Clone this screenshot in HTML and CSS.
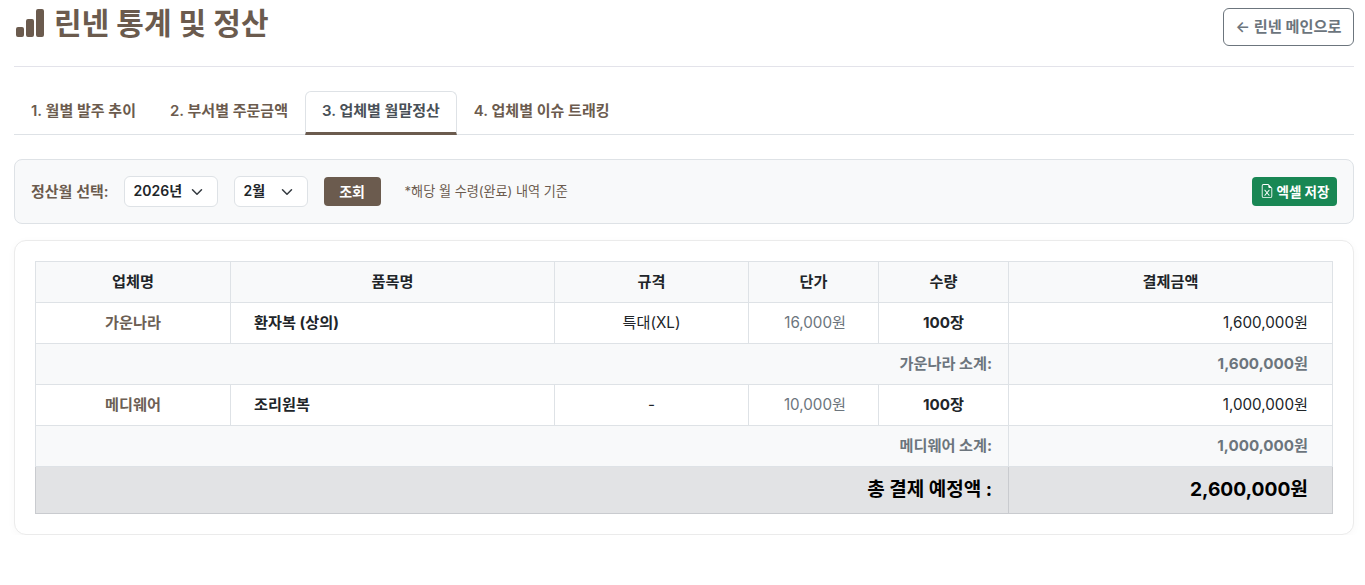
FILE: index.html
```html
<!DOCTYPE html>
<html lang="ko">
<head>
    <meta charset="UTF-8">
    <meta name="viewport" content="width=device-width, initial-scale=1.0">
    <title>린넨 통계 및 정산</title>
    <link rel="stylesheet" href="styles.css">
</head>
<body>

<div class="page">
    <div class="page-header">
        <h1 class="page-title">
            <svg class="title-icon" viewBox="0 0 16 16" fill="currentColor">
                <path d="M1 11a1 1 0 0 1 1-1h2a1 1 0 0 1 1 1v3a1 1 0 0 1-1 1H2a1 1 0 0 1-1-1v-3zm5-4a1 1 0 0 1 1-1h2a1 1 0 0 1 1 1v7a1 1 0 0 1-1 1H7a1 1 0 0 1-1-1V7zm5-5a1 1 0 0 1 1-1h2a1 1 0 0 1 1 1v12a1 1 0 0 1-1 1h-2a1 1 0 0 1-1-1V2z"/>
            </svg>
            린넨 통계 및 정산
        </h1>
        <a class="back-button" href="#">← 린넨 메인으로</a>
    </div>

    <div class="tabs">
        <a class="tab" href="#">1. 월별 발주 추이</a>
        <a class="tab" href="#">2. 부서별 주문금액</a>
        <a class="tab active" href="#">3. 업체별 월말정산</a>
        <a class="tab" href="#">4. 업체별 이슈 트래킹</a>
    </div>

    <div class="filter-box">
        <span class="filter-label">정산월 선택:</span>
        <div class="select select-year">2026년
            <svg class="chevron" viewBox="0 0 16 16"><path d="M2 5l6 6 6-6" fill="none" stroke="currentColor" stroke-width="2" stroke-linecap="round" stroke-linejoin="round"/></svg>
        </div>
        <div class="select select-month">2월
            <svg class="chevron" viewBox="0 0 16 16"><path d="M2 5l6 6 6-6" fill="none" stroke="currentColor" stroke-width="2" stroke-linecap="round" stroke-linejoin="round"/></svg>
        </div>
        <button class="search-button">조회</button>
        <span class="filter-note">*해당 월 수령(완료) 내역 기준</span>
        <button class="excel-button">
            <svg class="excel-icon" viewBox="0 0 16 16" fill="currentColor">
                <path d="M5.884 6.68a.5.5 0 1 0-.768.64L7.349 10l-2.233 2.68a.5.5 0 0 0 .768.64L8 10.781l2.116 2.54a.5.5 0 0 0 .768-.641L8.651 10l2.233-2.68a.5.5 0 0 0-.768-.64L8 9.219l-2.116-2.54z"/>
                <path d="M14 14V4.5L9.5 0H4a2 2 0 0 0-2 2v12a2 2 0 0 0 2 2h8a2 2 0 0 0 2-2zM9.5 3A1.5 1.5 0 0 0 11 4.5h2V14a1 1 0 0 1-1 1H4a1 1 0 0 1-1-1V2a1 1 0 0 1 1-1h5.5v2z"/>
            </svg>
            엑셀 저장
        </button>
    </div>

    <div class="card">
        <table class="settle-table">
            <colgroup>
                <col class="col-company">
                <col class="col-item">
                <col class="col-spec">
                <col class="col-price">
                <col class="col-qty">
                <col>
            </colgroup>
            <thead>
                <tr>
                    <th>업체명</th>
                    <th>품목명</th>
                    <th>규격</th>
                    <th>단가</th>
                    <th>수량</th>
                    <th>결제금액</th>
                </tr>
            </thead>
            <tbody>
                <tr>
                    <td class="company">가운나라</td>
                    <td class="item">환자복 (상의)</td>
                    <td class="center">특대(XL)</td>
                    <td class="price">16,000원</td>
                    <td class="qty">100장</td>
                    <td class="amount">1,600,000원</td>
                </tr>
                <tr class="subtotal">
                    <td colspan="5">가운나라 소계:</td>
                    <td>1,600,000원</td>
                </tr>
                <tr>
                    <td class="company">메디웨어</td>
                    <td class="item">조리원복</td>
                    <td class="center dash">-</td>
                    <td class="price">10,000원</td>
                    <td class="qty">100장</td>
                    <td class="amount">1,000,000원</td>
                </tr>
                <tr class="subtotal">
                    <td colspan="5">메디웨어 소계:</td>
                    <td>1,000,000원</td>
                </tr>
                <tr class="total">
                    <td colspan="5">총 결제 예정액 :</td>
                    <td>2,600,000원</td>
                </tr>
            </tbody>
        </table>
    </div>
</div>

</body>
</html>
```

FILE: styles.css
```css
* {
    box-sizing: border-box;
}
body {
    font-family: 'Inter', 'Noto Sans CJK KR', sans-serif;
    margin: 0;
    background-color: #fff;
    color: #212529;
    font-size: 15px;
}
.page {
    padding: 0 11px 0 14px;
}
.page-header {
    display: flex;
    justify-content: space-between;
    align-items: flex-start;
    height: 67px;
    padding-top: 8px;
    border-bottom: 1px solid #e3e3ea;
}
.page-title {
    display: flex;
    align-items: center;
    gap: 8px;
    margin: 0;
    height: 30px;
    font-size: 30px;
    font-weight: 700;
    line-height: 26px;
    color: #6b5b4e;
}
.title-icon {
    width: 32px;
    height: 32px;
}
.back-button {
    display: block;
    width: 131px;
    height: 38px;
    line-height: 35px;
    text-align: center;
    font-size: 15.2px;
    font-weight: 600;
    color: #6c757d;
    text-decoration: none;
    border: 1px solid #6c757d;
    border-radius: 6px;
}
.tabs {
    display: flex;
    margin-top: 24px;
    height: 44px;
    border-bottom: 1px solid #dee2e6;
}
.tab {
    height: 44px;
    line-height: 38px;
    padding: 0 16px;
    font-size: 15px;
    font-weight: 600;
    color: #6b5b4e;
    text-decoration: none;
    border: 1px solid transparent;
    border-radius: 6px 6px 0 0;
}
.tab.active {
    color: #495057;
    background-color: #fff;
    border-color: #dee2e6;
    border-bottom: 3px solid #6b5b4e;
}
.filter-box {
    display: flex;
    align-items: center;
    margin-top: 24px;
    height: 65px;
    padding: 0 16px;
    background-color: #f8f9fa;
    border: 1px solid #dee2e6;
    border-radius: 8px;
}
.filter-label {
    font-size: 15px;
    font-weight: 600;
    color: #6b5b4e;
    margin-right: 15px;
    position: relative;
    top: -1px;
}
.select {
    position: relative;
    height: 31px;
    line-height: 27px;
    padding-left: 9px;
    font-size: 14px;
    font-weight: 600;
    color: #212529;
    background-color: #fff;
    border: 1px solid #dee2e6;
    border-radius: 6px;
}
.select-year {
    width: 94px;
    margin-right: 16px;
}
.select-month {
    width: 74px;
    margin-right: 16px;
}
.chevron {
    position: absolute;
    right: 14px;
    top: 9px;
    width: 12px;
    height: 12px;
    color: #343a40;
}
.search-button {
    width: 57px;
    height: 29px;
    padding: 0 0 2px;
    font-family: inherit;
    font-size: 14px;
    font-weight: 700;
    color: #fff;
    background-color: #6b5b4e;
    border: none;
    border-radius: 4px;
    margin-right: 24px;
}
.filter-note {
    font-size: 13.1px;
    color: #6b5b4e;
    position: relative;
    top: -1px;
}
.excel-button {
    display: flex;
    align-items: center;
    justify-content: center;
    gap: 3px;
    width: 85px;
    height: 29px;
    margin-left: auto;
    padding: 0 0 2px;
    font-family: inherit;
    font-size: 13.5px;
    font-weight: 700;
    color: #fff;
    background-color: #198754;
    border: none;
    border-radius: 4px;
}
.excel-icon {
    width: 14px;
    height: 14px;
}
.card {
    margin-top: 16px;
    height: 295px;
    padding: 20px;
    background-color: #fff;
    border: 1px solid #ebebeb;
    border-radius: 12px;
    box-shadow: 0 2px 8px rgba(0, 0, 0, 0.03);
}
.settle-table {
    width: 1298px;
    table-layout: fixed;
    border-collapse: collapse;
    font-size: 15.2px;
}
.col-company {
    width: 195px;
}
.col-item {
    width: 324px;
}
.col-spec {
    width: 194px;
}
.col-price,
.col-qty {
    width: 130px;
}
.settle-table th,
.settle-table td {
    height: 41px;
    padding: 0 24px 5px;
    border: 1px solid #dee2e6;
    vertical-align: middle;
}
.settle-table th {
    text-align: center;
    font-weight: 700;
    color: #212529;
    background-color: #f8f9fa;
}
.company {
    text-align: center;
    font-weight: 600;
    color: #6c5f55;
}
.settle-table .item {
    padding-left: 23px;
    font-weight: 700;
}
.center {
    text-align: center;
}
.settle-table .dash {
    padding-bottom: 1px;
}
.price {
    text-align: right;
    padding-right: 32px !important;
    color: #6c757d;
}
.qty {
    text-align: center;
    font-weight: 700;
}
.amount {
    text-align: right;
}
.subtotal td {
    text-align: right;
    padding-right: 16px;
    font-weight: 700;
    color: #6c757d;
    background-color: #f8f9fa;
}
.subtotal td:last-child {
    padding-right: 24px;
}
.settle-table .total td {
    height: 47px;
    text-align: right;
    padding-right: 16px;
    font-size: 19px;
    font-weight: 700;
    color: #000;
    background-color: #e2e3e5;
    border-color: #c9cbcf;
}
.settle-table .total td:last-child {
    padding-right: 24px;
    font-size: 19.2px;
}
```
